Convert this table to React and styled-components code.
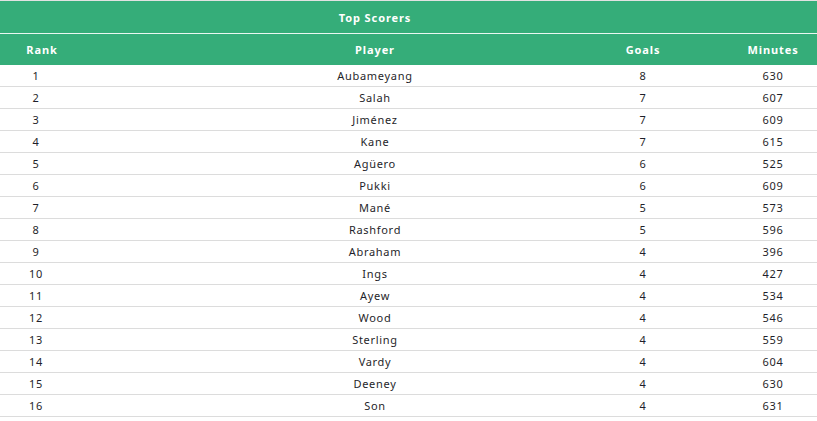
import styled, { createGlobalStyle } from "styled-components";

const GlobalStyle = createGlobalStyle`
  html, body {
    margin: 0;
    padding: 0;
    background: #fff;
  }
  *, *::before, *::after {
    box-sizing: border-box;
  }
  body {
    font-family: "Noto Sans", "DejaVu Sans", sans-serif;
  }
`;

const scorers = [
  { rank: 1, player: "Aubameyang", goals: 8, minutes: 630 },
  { rank: 2, player: "Salah", goals: 7, minutes: 607 },
  { rank: 3, player: "Jiménez", goals: 7, minutes: 609 },
  { rank: 4, player: "Kane", goals: 7, minutes: 615 },
  { rank: 5, player: "Agüero", goals: 6, minutes: 525 },
  { rank: 6, player: "Pukki", goals: 6, minutes: 609 },
  { rank: 7, player: "Mané", goals: 5, minutes: 573 },
  { rank: 8, player: "Rashford", goals: 5, minutes: 596 },
  { rank: 9, player: "Abraham", goals: 4, minutes: 396 },
  { rank: 10, player: "Ings", goals: 4, minutes: 427 },
  { rank: 11, player: "Ayew", goals: 4, minutes: 534 },
  { rank: 12, player: "Wood", goals: 4, minutes: 546 },
  { rank: 13, player: "Sterling", goals: 4, minutes: 559 },
  { rank: 14, player: "Vardy", goals: 4, minutes: 604 },
  { rank: 15, player: "Deeney", goals: 4, minutes: 630 },
  { rank: 16, player: "Son", goals: 4, minutes: 631 },
];

const GREEN = "#35ad79";

const StyledTable = styled.div`
  width: 817px;
  border-top: 1px solid #e2e2e2;
`;

const StyledRow = styled.div`
  display: grid;
  grid-template-columns: 193px 364px 172px 88px;
  align-items: center;
  height: ${({ $height }) => $height}px;
  background-color: ${({ $head }) => ($head ? GREEN : "#fff")};
  color: ${({ $head }) => ($head ? "#fff" : "#1f1f2a")};
  border-bottom: 1px solid ${({ $line }) => $line};
`;

const StyledTitle = styled.div`
  grid-column: 2;
  text-align: center;
  font-size: 11px;
  font-weight: bold;
  letter-spacing: 0.9px;
`;

const StyledCell = styled.div`
  text-align: center;
  font-size: 11px;
  font-weight: ${({ $head }) => ($head ? "bold" : "normal")};
  letter-spacing: ${({ $head }) => ($head ? "0.9px" : "0.7px")};
  width: ${({ $width }) => ($width ? `${$width}px` : "auto")};
`;

export default function App() {
  return (
    <>
      <GlobalStyle />
      <StyledTable>
        <StyledRow $head $height={33} $line="#eaf7f1">
          <StyledTitle>Top Scorers</StyledTitle>
        </StyledRow>
        <StyledRow $head $height={31} $line={GREEN}>
          <StyledCell $head $width={84}>
            Rank
          </StyledCell>
          <StyledCell $head>Player</StyledCell>
          <StyledCell $head>Goals</StyledCell>
          <StyledCell $head>Minutes</StyledCell>
        </StyledRow>
        {scorers.map((s) => (
          <StyledRow key={s.rank} $height={22} $line="#dcdcdc">
            <StyledCell $width={72}>{s.rank}</StyledCell>
            <StyledCell>{s.player}</StyledCell>
            <StyledCell>{s.goals}</StyledCell>
            <StyledCell>{s.minutes}</StyledCell>
          </StyledRow>
        ))}
      </StyledTable>
    </>
  );
}
